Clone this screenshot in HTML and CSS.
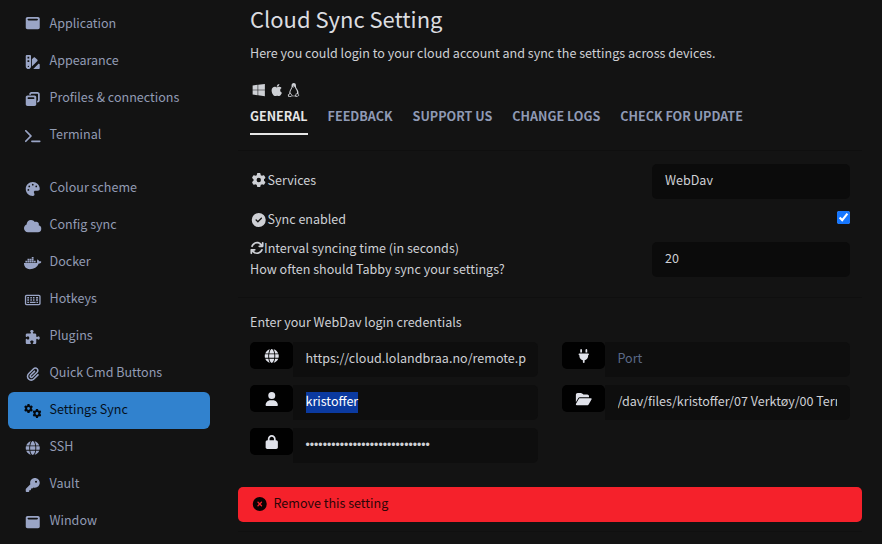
FILE: index.html
```
<!DOCTYPE html>
<html lang="en">
<head>
<meta charset="utf-8">
<title>Settings</title>
<link rel="stylesheet" href="styles.css">
</head>
<body>
<svg class="defs" aria-hidden="true">
  <symbol id="window" viewBox="0 0 512 512"><path d="M64 32C28.700 32 0 60.700 0 96V416c0 35.300 28.700 64 64 64H448c35.300 0 64-28.700 64-64V96c0-35.300-28.700-64-64-64H64zM96 96H416c17.700 0 32 14.300 32 32s-14.300 32-32 32H96c-17.700 0-32-14.300-32-32s14.300-32 32-32z"/></symbol>
  <symbol id="swatch" viewBox="0 0 512 512"><path d="M0 32C0 14.300 14.300 0 32 0H160c17.700 0 32 14.300 32 32V416c0 53-43 96-96 96s-96-43-96-96V32zM64 64v64h64V64H64zm0 128v64h64V192H64zM96 440a24 24 0 1 0 0-48 24 24 0 1 0 0 48zM224 418V154l67-67c12-12 33-12 45 0l91 91c12 12 12 33 0 45L225 424zM275 512l192-192H480c17.700 0 32 14.300 32 32V480c0 17.700-14.300 32-32 32H275z"/></symbol>
  <symbol id="restore" viewBox="0 0 512 512"><path d="M432 64H208c-8.800 0-16 7.200-16 16V96H128V80c0-44.200 35.800-80 80-80H432c44.200 0 80 35.800 80 80V304c0 44.200-35.800 80-80 80H416V320h16c8.800 0 16-7.200 16-16V80c0-8.800-7.200-16-16-16zM0 192c0-35.300 28.700-64 64-64H320c35.300 0 64 28.700 64 64V448c0 35.300-28.700 64-64 64H64c-35.300 0-64-28.700-64-64V192zm64 32c0 17.700 14.300 32 32 32H288c17.700 0 32-14.300 32-32s-14.300-32-32-32H96c-17.700 0-32 14.300-32 32z"/></symbol>
  <symbol id="terminal" viewBox="0 0 576 512"><path d="M9.400 86.600C-3.100 74.100-3.100 53.900 9.400 41.400s32.800-12.500 45.300 0l192 192c12.500 12.500 12.500 32.800 0 45.300l-192 192c-12.500 12.500-32.800 12.500-45.300 0s-12.500-32.800 0-45.300L178.700 256 9.400 86.600zM256 416H544c17.700 0 32 14.300 32 32s-14.300 32-32 32H256c-17.700 0-32-14.300-32-32s14.300-32 32-32z"/></symbol>
  <symbol id="palette" viewBox="0 0 512 512"><path d="M512 256c0 .9 0 1.800 0 2.700c-.4 36.500-33.600 61.300-70.100 61.300H344c-26.500 0-48 21.500-48 48c0 3.400 .4 6.700 1 9.900c2.100 10.200 6.500 20 10.800 29.900c6.100 13.800 12.100 27.500 12.100 42c0 31.800-21.600 60.700-53.400 62c-3.500 .1-7 .2-10.600 .2C114.600 512 0 397.400 0 256S114.600 0 256 0S512 114.600 512 256zM128 288a32 32 0 1 0-64 0 32 32 0 1 0 64 0zm0-96a32 32 0 1 0 0-64 32 32 0 1 0 0 64zM288 96a32 32 0 1 0-64 0 32 32 0 1 0 64 0zm96 96a32 32 0 1 0 0-64 32 32 0 1 0 0 64z"/></symbol>
  <symbol id="cloud" viewBox="0 0 640 512"><path d="M0 336c0 79.500 64.500 144 144 144H512c70.700 0 128-57.300 128-128c0-61.900-44-113.600-102.400-125.400c4.100-10.700 6.400-22.400 6.400-34.600c0-53-43-96-96-96c-19.700 0-38.100 6-53.300 16.200C367 64.200 315.300 32 256 32C167.600 32 96 103.600 96 192c0 2.700 .1 5.400 .2 8.100C40.200 219.800 0 273.200 0 336z"/></symbol>
  <symbol id="docker" viewBox="0 0 640 512"><path d="M349.900 236.300h-66.100v-59.400h66.100v59.400zm0-204.300h-66.100v60.700h66.100V32zm78.200 144.800H362v59.400h66.100v-59.400zm-156.300-72.100h-66.100v60.100h66.100v-60.100zm78.100 0h-66.100v60.100h66.100v-60.100zm276.800 100c-14.400-9.700-47.600-13.200-73.100-8.400-3.300-24-16.700-44.900-41.100-63.700l-14-9.300-9.300 14c-18.400 27.800-23.400 73.600-3.700 103.800-8.700 4.700-25.800 11.100-48.400 10.700H2.400c-8.700 50.800 5.800 116.800 44 162.100 37.100 43.900 92.700 66.200 165.400 66.200 157.400 0 273.900-72.500 328.400-204.200 21.400.4 67.600.1 91.300-45.200 1.500-2.500 6.600-13.200 8.500-17.100l-13.300-8.900zm-511.100-27.900h-66v59.400h66.100v-59.400zm78.100 0h-66.100v59.400h66.100v-59.400zm78.100 0h-66.100v59.400h66.100v-59.400zm-78.100-72.100h-66.100v60.100h66.100v-60.100z"/></symbol>
  <symbol id="keyboard" viewBox="0 0 576 512"><path fill-rule="evenodd" d="M64 64C28.700 64 0 92.700 0 128V384c0 35.300 28.700 64 64 64H512c35.300 0 64-28.700 64-64V128c0-35.300-28.700-64-64-64H64zM64 112H512c8.800 0 16 7.200 16 16V384c0 8.800-7.200 16-16 16H64c-8.800 0-16-7.200-16-16V128c0-8.800 7.200-16 16-16z"/><path d="M88 144h64v56H88zM200 144h56v56h-56zM296 144h56v56h-56zM408 144h72v56h-72zM88 228h64v56H88zM200 228h56v56h-56zM296 228h56v56h-56zM408 228h72v56h-72zM88 316h64v48H88zM184 316h208v48H184zM424 316h56v48h-56z"/></symbol>
  <symbol id="puzzle" viewBox="0 0 512 512"><path d="M192 104.800c0-9.200-5.800-17.300-13.200-22.800C167.200 73.300 160 61.300 160 48c0-26.500 28.700-48 64-48s64 21.500 64 48c0 13.300-7.200 25.300-18.800 34c-7.400 5.500-13.200 13.600-13.200 22.800v0c0 12.800 10.400 23.200 23.200 23.200H336c26.500 0 48 21.500 48 48v56.800c0 12.800 10.400 23.200 23.200 23.200v0c9.200 0 17.300-5.800 22.800-13.200c8.700-11.600 20.700-18.800 34-18.800c26.500 0 48 28.700 48 64s-21.500 64-48 64c-13.300 0-25.300-7.200-34-18.800c-5.500-7.400-13.600-13.200-22.800-13.200v0c-12.800 0-23.200 10.400-23.200 23.200V464c0 26.500-21.500 48-48 48H279.200c-12.800 0-23.200-10.400-23.200-23.200v0c0-9.200 5.800-17.300 13.200-22.800c11.600-8.700 18.800-20.700 18.800-34c0-26.500-28.700-48-64-48s-64 21.500-64 48c0 13.300 7.200 25.300 18.800 34c7.400 5.500 13.200 13.600 13.200 22.800v0c0 12.800-10.400 23.200-23.200 23.200H48c-26.500 0-48-21.500-48-48V343.200C0 330.400 10.400 320 23.200 320v0c9.200 0 17.300 5.800 22.800 13.200C54.700 344.800 66.700 352 80 352c26.500 0 48-28.700 48-64s-21.500-64-48-64c-13.300 0-25.300 7.200-34 18.800C40.500 250.200 32.400 256 23.200 256v0C10.400 256 0 245.600 0 232.800V176c0-26.500 21.500-48 48-48H168.800c12.800 0 23.200-10.400 23.200-23.200v0z"/></symbol>
  <symbol id="clip" viewBox="0 0 448 512"><path d="M364.200 83.800c-24.400-24.400-64-24.400-88.400 0l-184 184c-42.100 42.100-42.100 110.300 0 152.400s110.300 42.100 152.400 0l152-152c10.900-10.900 28.700-10.900 39.600 0s10.900 28.700 0 39.600l-152 152c-64 64-167.600 64-231.600 0s-64-167.600 0-231.600l184-184c46.300-46.300 121.300-46.300 167.600 0s46.300 121.300 0 167.600l-176 176c-28.600 28.600-75 28.600-103.600 0s-28.600-75 0-103.600l144-144c10.900-10.900 28.700-10.900 39.600 0s10.900 28.700 0 39.600l-144 144c-6.700 6.700-6.700 17.700 0 24.400s17.700 6.700 24.400 0l176-176c24.400-24.400 24.400-64 0-88.400z"/></symbol>
  <symbol id="gear" viewBox="0 0 512 512"><path d="M495.900 166.600c3.200 8.700 .5 18.400-6.400 24.600l-43.300 39.400c1.100 8.300 1.700 16.800 1.700 25.400s-.6 17.100-1.700 25.400l43.300 39.400c6.900 6.200 9.600 15.900 6.400 24.600c-4.400 11.900-9.700 23.300-15.800 34.300l-4.700 8.100c-6.600 11-14 21.400-22.100 31.200c-5.900 7.200-15.700 9.600-24.500 6.800l-55.700-17.700c-13.400 10.300-28.200 18.900-44 25.400l-12.500 57.100c-2 9.100-9 16.300-18.200 17.800c-13.800 2.300-28 3.500-42.500 3.500s-28.700-1.200-42.500-3.500c-9.200-1.500-16.200-8.700-18.200-17.800l-12.500-57.100c-15.800-6.500-30.600-15.100-44-25.400L83.100 425.900c-8.800 2.800-18.600 .3-24.500-6.800c-8.100-9.800-15.500-20.200-22.100-31.200l-4.700-8.100c-6.100-11-11.400-22.400-15.800-34.300c-3.200-8.700-.5-18.400 6.400-24.600l43.300-39.400C64.600 273.100 64 264.600 64 256s.6-17.100 1.700-25.400L22.400 191.200c-6.900-6.200-9.600-15.900-6.400-24.600c4.400-11.900 9.700-23.300 15.800-34.300l4.700-8.100c6.600-11 14-21.400 22.100-31.200c5.900-7.200 15.700-9.600 24.500-6.800l55.700 17.700c13.400-10.300 28.200-18.900 44-25.400l12.500-57.100c2-9.100 9-16.300 18.200-17.800C227.300 1.200 241.500 0 256 0s28.700 1.200 42.500 3.500c9.200 1.500 16.200 8.700 18.200 17.800l12.500 57.100c15.800 6.500 30.600 15.100 44 25.400l55.700-17.700c8.800-2.800 18.600-.3 24.500 6.800c8.100 9.800 15.500 20.200 22.100 31.200l4.700 8.100c6.100 11 11.400 22.400 15.800 34.300zM256 336a80 80 0 1 0 0-160 80 80 0 1 0 0 160z"/></symbol>
  <symbol id="gears" viewBox="0 0 640 512"><use href="#gear" x="0" y="0" width="330" height="330"/><use href="#gear" x="310" y="182" width="330" height="330"/></symbol>
  <symbol id="globe" viewBox="0 0 512 512"><path d="M352 256c0 22.200-1.200 43.600-3.300 64H163.300c-2.200-20.400-3.300-41.800-3.300-64s1.200-43.600 3.300-64H348.700c2.200 20.400 3.300 41.800 3.300 64zm28.800-64H503.900c5.300 20.500 8.100 41.900 8.100 64s-2.800 43.500-8.100 64H380.800c2.100-20.600 3.200-42 3.200-64s-1.100-43.400-3.200-64zm112.600-32H376.700c-10-63.900-29.800-117.400-55.300-151.600c78.300 20.700 142 77.500 171.900 151.600zm-149.100 0H167.700c6.100-36.400 15.500-68.600 27-94.700c10.500-23.600 22.200-40.700 33.500-51.500C239.400 3.200 248.700 0 256 0s16.600 3.200 27.800 13.800c11.300 10.800 23 27.900 33.500 51.500c11.600 26 20.900 58.200 27 94.700zm-209 0H18.600C48.600 85.900 112.200 29.100 190.600 8.400C165.100 42.600 145.300 96.100 135.300 160zM8.100 192H131.200c-2.100 20.600-3.200 42-3.200 64s1.100 43.400 3.200 64H8.100C2.800 299.500 0 278.100 0 256s2.800-43.500 8.100-64zM194.700 446.600c-11.600-26-20.900-58.200-27-94.600H344.300c-6.100 36.400-15.500 68.600-27 94.600c-10.500 23.600-22.200 40.700-33.500 51.500C272.600 508.800 263.300 512 256 512s-16.600-3.200-27.800-13.800c-11.300-10.800-23-27.900-33.500-51.500zM135.300 352c10 63.900 29.800 117.400 55.300 151.600C112.200 482.900 48.600 426.100 18.600 352H135.300zm358.100 0c-30 74.100-93.600 130.900-171.900 151.600c25.500-34.200 45.200-87.700 55.300-151.600H493.400z"/></symbol>
  <symbol id="key" viewBox="0 0 512 512"><path d="M336 352c97.200 0 176-78.800 176-176S433.200 0 336 0S160 78.800 160 176c0 18.700 2.900 36.800 8.300 53.700L7 391c-4.500 4.500-7 10.600-7 17v80c0 13.300 10.700 24 24 24h80c13.300 0 24-10.700 24-24V448h40c13.300 0 24-10.700 24-24V384h40c6.400 0 12.500-2.500 17-7l33.300-33.300c16.900 5.400 35 8.300 53.700 8.300zM376 96a40 40 0 1 1 0 80 40 40 0 1 1 0-80z"/></symbol>
  <symbol id="windows" viewBox="0 0 448 512"><path d="M0 93.700l183.600-25.300v177.400H0V93.700zm0 324.600l183.600 25.300V268.400H0v149.900zm203.800 28L448 480V268.400H203.800v177.900zm0-380.600v180.100H448V32L203.800 65.700z"/></symbol>
  <symbol id="apple" viewBox="0 0 384 512"><path d="M318.700 268.700c-.2-36.700 16.400-64.400 50-84.800-18.800-26.900-47.200-41.700-84.700-44.600-35.500-2.800-74.300 20.700-88.500 20.700-15 0-49.400-19.700-76.400-19.700C63.300 141.200 4 184.800 4 273.500q0 39.300 14.400 81.200c12.800 36.700 59 126.700 107.200 125.200 25.200-.6 43-17.900 75.800-17.900 31.800 0 48.300 17.900 76.400 17.900 48.600-.7 90.400-82.500 102.600-119.300-65.200-30.700-61.700-90-61.700-91.900zm-56.600-164.200c27.300-32.400 24.800-61.900 24-72.500-24.100 1.400-52 16.400-67.900 34.900-17.500 19.800-27.800 44.300-25.600 71.900 26.100 2 49.900-11.400 69.500-34.300z"/></symbol>
  <symbol id="linux" viewBox="0 0 448 512"><path fill-rule="evenodd" d="M224 0c-52 0-84 38-80 96 2 44 2 66-18 98-28 43-58 91-64 150-3 24 0 43-10 57-12 12-37 8-42 28-5 18 7 33 1 50-2 19 34 18 61 28 37 15 56 2 69-15 46-13 98-12 140 1 17 22 52 27 81 0 22-18 67-25 65-47-2-18-22-23-29-42-5-29 1-51-6-88-9-48-35-81-60-116-33-45-23-61-29-119C300 31 274 0 224 0zM201 105l23-9 30 13-27 26-32-18zM185 142l35 21 43-22 18 51c22 38 54 76 60 127 5 38 0 55-13 67l-29 0c-10 25-6 41-19 58-39 26-89 27-118 3-4-31-39-53-57-88-8-49 11-100 39-134 20-29 28-55 41-83zM97 392l43 54c12 19 5 41-16 42-31-8-54-17-79-22 4-21-6-34-1-41 24-3 37-7 53-33zM326 393l25 16 31-11c2 28 13 38 25 45-24 16-50 36-64 43-24 6-31-12-27-31z"/><circle cx="190" cy="79" r="17"/><circle cx="249" cy="79" r="19"/></symbol>
  <symbol id="check" viewBox="0 0 512 512"><path d="M256 512A256 256 0 1 0 256 0a256 256 0 1 0 0 512zM369 209L241 337c-9.400 9.400-24.600 9.400-33.900 0l-64-64c-9.400-9.400-9.400-24.600 0-33.900s24.600-9.400 33.900 0l47 47L335 175c9.400-9.400 24.600-9.400 33.900 0s9.400 24.600 0 33.900z"/></symbol>
  <symbol id="cross" viewBox="0 0 512 512"><path d="M256 512A256 256 0 1 0 256 0a256 256 0 1 0 0 512zM175 175c9.400-9.400 24.600-9.400 33.900 0l47 47 47-47c9.400-9.400 24.600-9.400 33.900 0s9.400 24.600 0 33.900l-47 47 47 47c9.400 9.400 9.400 24.600 0 33.900s-24.600 9.400-33.900 0l-47-47-47 47c-9.400 9.400-24.600 9.400-33.900 0s-9.400-24.600 0-33.900l47-47-47-47c-9.400-9.400-9.400-24.600 0-33.900z"/></symbol>
  <symbol id="sync" viewBox="0 0 512 512"><path d="M105.100 202.600c7.700-21.800 20.200-42.300 37.800-59.800c62.500-62.500 163.800-62.500 226.300 0L386.300 160H336c-17.700 0-32 14.300-32 32s14.300 32 32 32H463.500c17.700 0 32-14.300 32-32V64c0-17.700-14.300-32-32-32s-32 14.300-32 32v51.200L414.400 97.600c-87.500-87.500-229.300-87.500-316.800 0C73.200 122 55.600 150.700 44.800 181.400c-5.900 16.700 2.900 34.900 19.500 40.800s34.900-2.900 40.800-19.500zM39 289.300c-5 1.500-9.800 4.200-13.700 8.200c-4 4-6.700 8.800-8.100 14c-1.200 4.300-1.200 7-1.200 8.500V448c0 17.700 14.300 32 32 32s32-14.300 32-32V396.900l17.600 17.500c87.500 87.400 229.300 87.400 316.700 0c24.400-24.400 42.100-53.100 52.900-83.700c5.900-16.700-2.900-34.900-19.500-40.800s-34.900 2.900-40.800 19.500c-7.700 21.800-20.200 42.300-37.800 59.800c-62.500 62.500-163.800 62.500-226.300 0L125.600 352H176c17.700 0 32-14.300 32-32s-14.300-32-32-32H48.400c-3.200 0-6.300 .4-9.400 1.300z"/></symbol>
  <symbol id="user" viewBox="0 0 448 512"><path d="M224 256A128 128 0 1 0 224 0a128 128 0 1 0 0 256zm-45.700 48C79.800 304 0 383.800 0 482.300C0 498.700 13.300 512 29.700 512H418.300c16.400 0 29.700-13.300 29.700-29.700C448 383.800 368.200 304 269.700 304H178.300z"/></symbol>
  <symbol id="lock" viewBox="0 0 448 512"><path d="M144 144v48H304V144c0-44.200-35.800-80-80-80s-80 35.800-80 80zM80 192V144C80 64.500 144.500 0 224 0s144 64.500 144 144v48h16c35.300 0 64 28.700 64 64V448c0 35.300-28.700 64-64 64H64c-35.300 0-64-28.700-64-64V256c0-35.300 28.700-64 64-64H80z"/></symbol>
  <symbol id="plug" viewBox="0 0 384 512"><path d="M96 0C78.300 0 64 14.300 64 32v96h64V32c0-17.700-14.300-32-32-32zM288 0c-17.700 0-32 14.300-32 32v96h64V32c0-17.700-14.300-32-32-32zM32 160c-17.700 0-32 14.300-32 32s14.300 32 32 32v32c0 77.400 55 142 128 156.800V480c0 17.700 14.300 32 32 32s32-14.300 32-32V412.800C297 398 352 333.400 352 256V224c17.700 0 32-14.300 32-32s-14.300-32-32-32H32z"/></symbol>
  <symbol id="folder" viewBox="0 0 576 512"><path d="M88.700 223.800L0 375.800V96C0 60.700 28.700 32 64 32H181.500c17 0 33.300 6.700 45.300 18.700l26.500 26.500c12 12 28.300 18.700 45.300 18.700H416c35.300 0 64 28.700 64 64v32H144c-22.800 0-43.800 12.100-55.300 31.800zm27.600 16.100C122.100 230 132.600 224 144 224H544c11.500 0 22 6.100 27.700 16.100s5.700 22.200-.1 32.100l-112 192C453.900 474 443.400 480 432 480H32c-11.500 0-22-6.100-27.700-16.100s-5.700-22.200 .1-32.100l112-192z"/></symbol>
</svg>

<div class="app">
  <nav class="sidebar">
    <a class="item"><svg class="icon raised"><use href="#window"/></svg>Application</a>
    <a class="item"><svg class="icon"><use href="#swatch"/></svg>Appearance</a>
    <a class="item"><svg class="icon"><use href="#restore"/></svg>Profiles &amp; connections</a>
    <a class="item"><svg class="icon"><use href="#terminal"/></svg>Terminal</a>
    <a class="item group"><svg class="icon"><use href="#palette"/></svg>Colour scheme</a>
    <a class="item"><svg class="icon"><use href="#cloud"/></svg>Config sync</a>
    <a class="item"><svg class="icon"><use href="#docker"/></svg>Docker</a>
    <a class="item"><svg class="icon"><use href="#keyboard"/></svg>Hotkeys</a>
    <a class="item"><svg class="icon"><use href="#puzzle"/></svg>Plugins</a>
    <a class="item"><svg class="icon"><use href="#clip"/></svg>Quick Cmd Buttons</a>
    <a class="item active"><svg class="icon"><use href="#gears"/></svg>Settings Sync</a>
    <a class="item"><svg class="icon"><use href="#globe"/></svg>SSH</a>
    <a class="item"><svg class="icon"><use href="#key"/></svg>Vault</a>
    <a class="item"><svg class="icon"><use href="#window"/></svg>Window</a>
  </nav>

  <main class="content">
    <header class="intro">
      <h1>Cloud Sync Setting</h1>
      <p>Here you could login to your cloud account and sync the settings across devices.</p>
      <div class="platforms">
        <svg class="icon"><use href="#windows"/></svg><svg class="icon"><use href="#apple"/></svg><svg class="icon"><use href="#linux"/></svg>
      </div>
      <div class="tabs">
        <a class="tab current">GENERAL</a>
        <a class="tab">FEEDBACK</a>
        <a class="tab">SUPPORT US</a>
        <a class="tab">CHANGE LOGS</a>
        <a class="tab">CHECK FOR UPDATE</a>
      </div>
    </header>

    <section class="options">
      <div class="row services">
        <div class="label"><svg class="icon"><use href="#gear"/></svg>Services</div>
        <div class="field">WebDav</div>
      </div>
      <div class="row enabled">
        <div class="label"><svg class="icon"><use href="#check"/></svg>Sync enabled</div>
        <input class="toggle" type="checkbox" checked>
      </div>
      <div class="row interval">
        <div>
          <div class="label"><svg class="icon narrow"><use href="#sync"/></svg>Interval syncing time (in seconds)</div>
          <div class="label">How often should Tabby sync your settings?</div>
        </div>
        <div class="field">20</div>
      </div>
    </section>

    <section class="credentials">
      <p>Enter your WebDav login credentials</p>
      <div class="grid">
        <div class="group-input"><span class="addon"><svg class="icon"><use href="#globe"/></svg></span><div class="field">https://cloud.lolandbraa.no/remote.p</div></div>
        <div class="group-input"><span class="addon"><svg class="icon"><use href="#plug"/></svg></span><div class="field placeholder">Port</div></div>
        <div class="group-input"><span class="addon"><svg class="icon"><use href="#user"/></svg></span><div class="field"><span class="selected">kristoffer</span></div></div>
        <div class="group-input"><span class="addon"><svg class="icon"><use href="#folder"/></svg></span><div class="field"><div class="clip">/dav/files/kristoffer/07 Verktøy/00 Term</div></div></div>
        <div class="group-input"><span class="addon"><svg class="icon"><use href="#lock"/></svg></span><div class="field password">•••••••••••••••••••••••••••••</div></div>
      </div>
    </section>

    <button class="remove"><svg class="icon"><use href="#cross"/></svg>Remove this setting</button>
    <hr class="end">
  </main>
</div>
</body>
</html>
```
FILE: styles.css
```
* { box-sizing: border-box; }

body {
  margin: 0;
  height: 544px;
  overflow: hidden;
  background: #131313;
  color: #ced0d5;
  font-family: "Noto Sans CJK SC", "Noto Sans", sans-serif;
  font-size: 12.56px;
  line-height: 21px;
}

p, h1 { margin: 0; font-weight: 400; }

.defs { position: absolute; width: 0; height: 0; }

.icon {
  flex: none;
  width: 17.5px;
  height: 14px;
  fill: currentColor;
}

.app { display: flex; height: 544px; }

.sidebar {
  width: 218px;
  padding: 6px 8px 0;
  color: #929bb3;
}

.item {
  display: flex;
  align-items: center;
  gap: 8px;
  height: 37px;
  padding: 0 16px 4px;
  border-radius: 6px;
  white-space: nowrap;
}

.item .icon { margin-top: 5px; fill: #9aa5c6; }
.item .icon.raised { margin-top: 1px; }
.item.group { margin-top: 16px; }
.item.active { background: #3182ce; color: #05101c; }
.item.active .icon { fill: #05090e; }

.content {
  width: 624px;
  margin-left: 20px;
}

.intro {
  height: 150px;
  padding: 2px 12px 0;
}

h1 {
  font-size: 21.98px;
  line-height: 34px;
  color: #dcdde0;
}

.intro p { margin-top: 6px; }

.platforms {
  display: flex;
  height: 14px;
  margin-top: 20px;
}

.tabs {
  display: flex;
  gap: 20px;
  margin-top: 8px;
}

.tab {
  height: 30px;
  font-weight: 700;
  color: #8f9ab5;
}

.tab.current {
  color: #e6e6e6;
  border-bottom: 2px solid #e6e6e6;
}

.options {
  height: 147px;
  padding: 13px 12px 0;
  border-top: 1px solid #0f0f0f;
}

.row {
  display: flex;
  justify-content: space-between;
}

.label {
  display: flex;
  align-items: center;
}

.icon.narrow { width: 14px; }
.services .label { padding-bottom: 4px; }

.services, .interval { height: 35px; }

.enabled {
  height: 43px;
  padding-top: 9px;
}

.enabled .label { height: 21px; }
.enabled .icon { margin-top: 2px; }

.toggle {
  width: 13px;
  height: 13px;
  margin: 3px 0 0;
  accent-color: #1677ff;
}

.interval > :first-child { margin-top: -5px; }

.field {
  width: 198px;
  height: 35px;
  padding: 5px 13px;
  border-radius: 5px;
  background: #0b0b0b;
  white-space: nowrap;
}

.credentials {
  height: 190px;
  padding: 13px 12px 0;
  border-top: 1px solid #0f0f0f;
}

.grid {
  display: grid;
  grid-template-columns: 288px 288px;
  column-gap: 24px;
  row-gap: 8px;
  margin-top: 10px;
}

.group-input { display: flex; align-items: flex-start; }

.addon {
  display: flex;
  align-items: center;
  justify-content: center;
  width: 43px;
  height: 27px;
  border-radius: 5px;
  background: #010101;
  color: #e0e2ea;
}

.group-input .field {
  width: 245px;
  padding-left: 12.5px;
  border-radius: 0 5px 5px 0;
  background: #0e0e0e;
}

.clip { overflow: hidden; }
.group-input .placeholder { color: #5b6a88; }

.selected {
  display: block;
  width: fit-content;
  margin-top: 2px;
  padding-bottom: 4px;
  line-height: 17px;
  background: #0b3aa0;
  color: #fff;
}

.group-input .password {
  padding-top: 7px;
  font-family: "Liberation Sans", sans-serif;
  font-size: 12.25px;
}

.remove {
  display: flex;
  align-items: center;
  gap: 5px;
  width: 100%;
  height: 35px;
  padding: 0 13px 4px;
  border: 0;
  border-radius: 5px;
  background: #f5212b;
  color: #2d0507;
  font: inherit;
}

.remove .icon { margin-top: 3px; color: #0c0203; }

.end {
  height: 1px;
  margin: 9px 0 0;
  border: 0;
  background: #101010;
}
```
